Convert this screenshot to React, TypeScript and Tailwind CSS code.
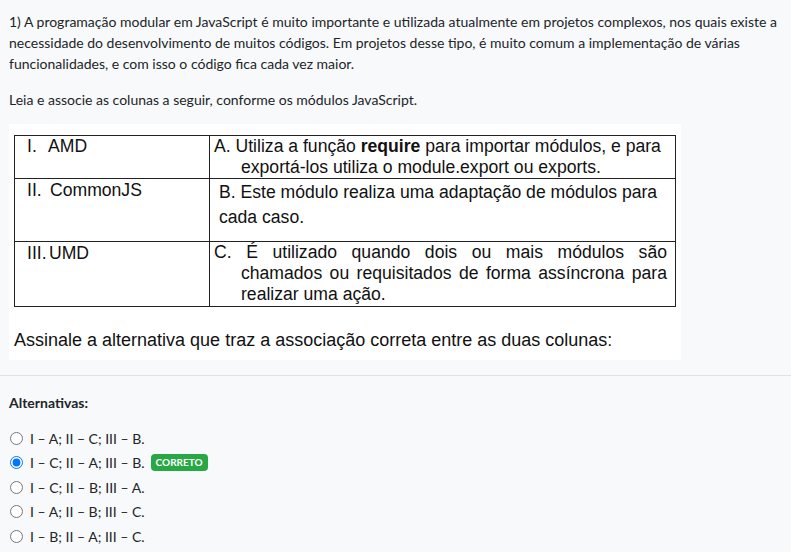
import React from "react";

const alternativas = [
  { text: "I – A; II – C; III – B.", checked: false },
  { text: "I – C; II – A; III – B.", checked: true, correto: true },
  { text: "I – C; II – B; III – A.", checked: false },
  { text: "I – A; II – B; III – C.", checked: false },
  { text: "I – B; II – A; III – C.", checked: false },
];

const App: React.FC = () => {
  return (
    <div className="min-h-[552px] w-[791px] bg-[#f8f9fa] font-['Lato',sans-serif] text-[14px] leading-[21px] text-[#212529]">
      <div className="px-[9px] pt-[11px]">
        <p className="mb-[15px] whitespace-nowrap">
          1) A programação modular em JavaScript é muito importante e utilizada atualmente em projetos complexos, nos
          quais existe a<br />
          necessidade do desenvolvimento de muitos códigos. Em projetos desse tipo, é muito comum a implementação de
          várias
          <br />
          funcionalidades, e com isso o código fica cada vez maior.
        </p>
        <p className="mb-[14px]">Leia e associe as colunas a seguir, conforme os módulos JavaScript.</p>

        {/* enunciado em imagem */}
        <div className="w-[672px] bg-white pl-[5px] pt-[11px] pb-[8px] font-['Liberation_Sans',Arial,sans-serif] text-[17.6px] text-[#111]">
          <table className="w-[662px] border-collapse border border-[#222]">
            <tbody>
              <tr className="h-[43px] align-top">
                <td className="w-[195px] border border-[#222] pl-[12px] leading-[20px]">
                  <span className="inline-block w-[21px]">I.</span>AMD
                </td>
                <td className="border border-[#222] pl-[31px] pr-[4px] -indent-[27px] leading-[21px]">
                  A. Utiliza a função <b>require</b> para importar módulos, e para exportá-los utiliza o module.export
                  ou exports.
                </td>
              </tr>
              <tr className="h-[63px] align-top">
                <td className="border border-[#222] pl-[12px] pt-px leading-[20px]">
                  <span className="inline-block w-[23px]">II.</span>CommonJS
                </td>
                <td className="border border-[#222] pl-[9px] pr-[4px] pt-px leading-[25px]">
                  B. Este módulo realiza uma adaptação de módulos para cada caso.
                </td>
              </tr>
              <tr className="h-[65px] align-top">
                <td className="border border-[#222] pl-[12px] pt-px leading-[20px]">
                  <span className="inline-block w-[22px]">III.</span>UMD
                </td>
                <td className="border border-[#222] pl-[31px] pr-[8px] -indent-[27px] text-justify leading-[21px]">
                  C. É utilizado quando dois ou mais módulos são chamados ou requisitados de forma assíncrona para
                  realizar uma ação.
                </td>
              </tr>
            </tbody>
          </table>
          <p className="mt-[21px] text-[18px] leading-[24px]">
            Assinale a alternativa que traz a associação correta entre as duas colunas:
          </p>
        </div>
      </div>

      <hr className="mt-[15px] border-t border-[#dee2e6]" />

      <div className="px-[9px] pt-[16px]">
        <p className="mb-[13px] font-bold">Alternativas:</p>
        <div className="flex flex-col">
          {alternativas.map((alt, i) => (
            <label key={i} className="flex h-[24.5px] items-center">
              <input
                type="radio"
                name="alt"
                defaultChecked={alt.checked}
                className="m-0 ml-px mr-[7px] h-[13px] w-[13px] accent-[#0075ff]"
              />
              <span>{alt.text}</span>
              {alt.correto && (
                <span className="ml-[6px] rounded-[4px] bg-[#28a745] px-[5px] py-[1px] text-[10px] font-bold leading-[15px] text-white">
                  CORRETO
                </span>
              )}
            </label>
          ))}
        </div>
      </div>
    </div>
  );
};

export default App;
